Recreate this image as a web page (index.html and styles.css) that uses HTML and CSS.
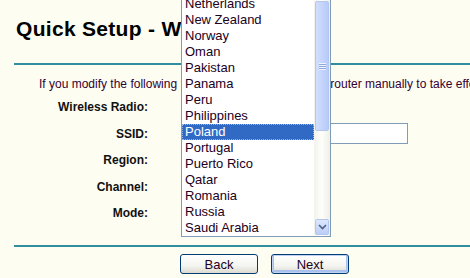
FILE: index.html
```html
<!DOCTYPE HTML>
<html>
	<head>
		<meta charset="UTF-8">
		<title>Quick Setup - Wireless</title>
		<link rel="stylesheet" href="styles.css">
	</head>
	<body>
		<div class="page">
			<h1 class="title">Quick Setup - Wireless</h1>
			<div class="rule"></div>
			<p class="info">If you modify the following <span class="info_middle">parameters, please reboot </span>router manually to take effect.</p>
			<div class="form">
				<div class="row"><span class="label">Wireless Radio:</span><span class="value"></span></div>
				<div class="row"><span class="label">SSID:</span><span class="value"><input class="ssid" type="text" value=""></span></div>
				<div class="row"><span class="label">Region:</span><span class="value"></span></div>
				<div class="row"><span class="label">Channel:</span><span class="value"></span></div>
				<div class="row"><span class="label">Mode:</span><span class="value"></span></div>
			</div>
			<div class="rule"></div>
			<div class="buttons">
				<button class="bouton">Back</button>
				<button class="bouton bouton_default">Next</button>
			</div>
		</div>

		<!-- region dropdown, opened over the form -->
		<div class="dropdown">
			<ul class="options">
				<li>Netherlands</li>
				<li>New Zealand</li>
				<li>Norway</li>
				<li>Oman</li>
				<li>Pakistan</li>
				<li>Panama</li>
				<li>Peru</li>
				<li>Philippines</li>
				<li class="selected">Poland</li>
				<li>Portugal</li>
				<li>Puerto Rico</li>
				<li>Qatar</li>
				<li>Romania</li>
				<li>Russia</li>
				<li>Saudi Arabia</li>
			</ul>
			<div class="scrollbar">
				<div class="thumb"><span class="grip"></span></div>
				<div class="arrow_down">
					<svg width="9" height="6" viewBox="0 0 9 6"><path d="M1 1 L4.5 4.5 L8 1" fill="none" stroke="#4d6185" stroke-width="1.6"/></svg>
				</div>
			</div>
		</div>
	</body>
</html>
```

FILE: styles.css
```css
html, body{
	margin: 0;
	background-color: #fdfdf1;
	font-family: "Liberation Sans", Arial, sans-serif;
	overflow: hidden;
}
.page{
	width: 600px;
	padding-left: 14px;
}
.title{
	margin: 0;
	padding: 17px 0 0 2px;
	height: 46px;
	font-size: 21px;
	line-height: 24px;
	letter-spacing: 0.3px;
	font-weight: bold;
	color: #000;
	white-space: nowrap;
}
.rule{
	height: 2px;
	background-color: #2f8f9f;
}
.info{
	margin: 0;
	padding: 12px 0 0 25px;
	height: 16px;
	font-size: 12px;
	line-height: 14px;
	color: #330033;
	white-space: nowrap;
}
.info_middle{
	letter-spacing: 0.25px;
}
.form{
	padding-top: 1px;
	height: 151px;
}
.row{
	display: flex;
	align-items: center;
	height: 26.5px;
}
.label{
	width: 134px;
	text-align: right;
	font-size: 12px;
	font-weight: bold;
	color: #111;
}
.value{
	padding-left: 33px;
}
.ssid{
	box-sizing: border-box;
	width: 227px;
	height: 21px;
	margin: 0;
	border: 1px solid #7f9db9;
	background-color: #fff;
}
.buttons{
	display: flex;
	gap: 13px;
	padding: 7px 0 0 166px;
}
.bouton{
	box-sizing: border-box;
	width: 78px;
	height: 20px;
	padding: 0;
	border: 1px solid #003c74;
	border-radius: 3px;
	background: linear-gradient(#ffffff, #f4f4f0 60%, #dcdad0);
	font-family: "Liberation Sans", Arial, sans-serif;
	font-size: 13px;
	color: #220022;
}
.bouton_default{
	box-shadow: inset 0 0 0 1px #c0d2f4, inset 0 -1px 0 2px #a8c0ec;
}
.dropdown{
	position: absolute;
	left: 181px;
	top: -5px;
	width: 148px;
	height: 240px;
	border: 1px solid #7f9db9;
	background-color: #fff;
	overflow: hidden;
}
.options{
	list-style: none;
	margin: 0;
	padding: 0;
	width: 132px;
}
.options li{
	height: 16px;
	line-height: 16px;
	padding-left: 3px;
	font-size: 13px;
	color: #220022;
	white-space: nowrap;
}
.options li.selected{
	background-color: #316ac5;
	color: #fff;
	outline: 1px dotted #9db4d9;
	outline-offset: -1px;
}
.scrollbar{
	position: absolute;
	top: 0;
	right: 0;
	width: 16px;
	height: 100%;
	background: linear-gradient(to right, #f3f2ec, #fefefb 50%, #efeee6);
}
.thumb{
	position: absolute;
	left: 1px;
	top: 5px;
	width: 12px;
	height: 128px;
	border: 1px solid #b1c7f2;
	border-radius: 2px;
	background: linear-gradient(to right, #d2dffd, #c4d4fc 50%, #b8cbf6);
	display: flex;
	align-items: center;
	justify-content: center;
}
.grip{
	width: 7px;
	height: 7px;
	background: repeating-linear-gradient(#eef3fe 0 1px, #8fa9df 1px 2px);
}
.arrow_down{
	position: absolute;
	left: 1px;
	bottom: 1px;
	width: 12px;
	height: 14px;
	border: 1px solid #b1c7f2;
	border-radius: 2px;
	background: linear-gradient(#dde7fe, #bccdf7);
	display: flex;
	align-items: center;
	justify-content: center;
}
```
